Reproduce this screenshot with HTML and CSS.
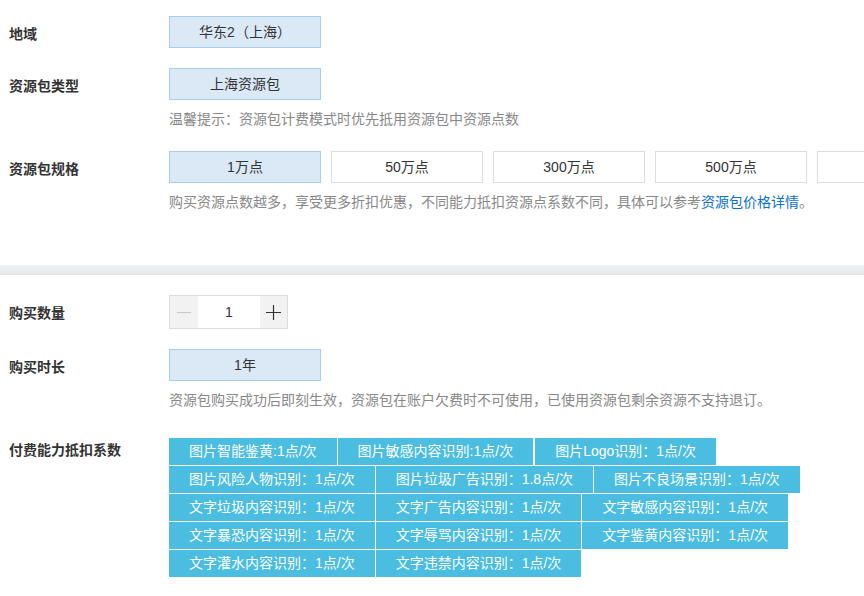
FILE: index.html
```html
<!DOCTYPE html>
<html lang="zh-CN">
<head>
    <meta charset="UTF-8">
    <meta name="viewport" content="width=device-width, initial-scale=1.0">
    <title>资源包购买</title>
    <link rel="stylesheet" href="styles.css">
</head>
<body>

<div class="page">
    <div class="section section-top">
        <div class="row">
            <div class="label">地域</div>
            <div class="field">
                <div class="options">
                    <span class="option active">华东2（上海）</span>
                </div>
            </div>
        </div>
        <div class="row">
            <div class="label">资源包类型</div>
            <div class="field">
                <div class="options">
                    <span class="option active">上海资源包</span>
                </div>
                <p class="hint">温馨提示：资源包计费模式时优先抵用资源包中资源点数</p>
            </div>
        </div>
        <div class="row">
            <div class="label">资源包规格</div>
            <div class="field">
                <div class="options">
                    <span class="option active">1万点</span>
                    <span class="option">50万点</span>
                    <span class="option">300万点</span>
                    <span class="option">500万点</span>
                    <span class="option"></span>
                </div>
                <p class="hint">购买资源点数越多，享受更多折扣优惠，不同能力抵扣资源点系数不同，具体可以参考<a href="#">资源包价格详情</a>。</p>
            </div>
        </div>
    </div>

    <div class="divider"></div>

    <div class="section section-bottom">
        <div class="row">
            <div class="label">购买数量</div>
            <div class="field">
                <div class="stepper">
                    <span class="step step-minus">
                        <svg width="14" height="14" viewBox="0 0 14 14"><path d="M0 7.5H14" stroke="#c8c8c8" stroke-width="1"/></svg>
                    </span>
                    <span class="step-value">1</span>
                    <span class="step step-plus">
                        <svg width="15" height="15" viewBox="0 0 15 15"><path d="M0 7.5H15M7.5 0V15" stroke="#333" stroke-width="1.2"/></svg>
                    </span>
                </div>
            </div>
        </div>
        <div class="row">
            <div class="label">购买时长</div>
            <div class="field">
                <div class="options">
                    <span class="option active">1年</span>
                </div>
                <p class="hint">资源包购买成功后即刻生效，资源包在账户欠费时不可使用，已使用资源包剩余资源不支持退订。</p>
            </div>
        </div>
        <div class="row row-tags">
            <div class="label label-tags">付费能力抵扣系数</div>
            <div class="field">
                <div class="tags">
                    <span class="tag">图片智能鉴黄:1点/次</span>
                    <span class="tag tag-wide">图片敏感内容识别:1点/次</span>
                    <span class="tag">图片Logo识别：1点/次</span>
                    <span class="tag">图片风险人物识别：1点/次</span>
                    <span class="tag">图片垃圾广告识别：1.8点/次</span>
                    <span class="tag">图片不良场景识别：1点/次</span>
                    <span class="tag">文字垃圾内容识别：1点/次</span>
                    <span class="tag">文字广告内容识别：1点/次</span>
                    <span class="tag">文字敏感内容识别：1点/次</span>
                    <span class="tag">文字暴恐内容识别：1点/次</span>
                    <span class="tag">文字辱骂内容识别：1点/次</span>
                    <span class="tag">文字鉴黄内容识别：1点/次</span>
                    <span class="tag">文字灌水内容识别：1点/次</span>
                    <span class="tag">文字违禁内容识别：1点/次</span>
                </div>
            </div>
        </div>
    </div>
</div>

</body>
</html>
```

FILE: styles.css
```css
/* Colors */
:root {
    --text: #333333;
    --muted: #888888;
    --link: #0a6fcf;
    --active-bg: #dbe8f5;
    --active-border: #a9cdec;
    --line: #dddddd;
    --tag: #4abde0;
}

html, body {
    overflow: hidden;
}

body {
    margin: 0;
    padding: 0;
    background-color: #ffffff;
    color: var(--text);
    font-family: "Liberation Sans", "Noto Sans CJK SC", sans-serif;
    font-size: 14px;
}

.page {
    width: 864px;
    overflow: hidden;
}

.section-top {
    padding: 16px 0 51px;
}

.section-bottom {
    padding: 20px 0 20px;
}

.divider {
    height: 9px;
    background: linear-gradient(#f1f2f4, #e7e8ea);
    border-bottom: 1px solid #e2e3e5;
}

/* Rows */
.row {
    display: flex;
    padding-left: 9px;
    margin-bottom: 20px;
}

.row:last-child {
    margin-bottom: 0;
}

.row-tags {
    margin-top: 26px;
}

.label {
    width: 160px;
    flex-shrink: 0;
    font-weight: bold;
    line-height: 20px;
    padding-top: 8px;
}

.label-tags {
    padding-top: 2px;
}

.field {
    flex: 1;
    min-width: 0;
}

/* Option buttons */
.options {
    display: flex;
    gap: 10px;
}

.option {
    flex-shrink: 0;
    width: 152px;
    height: 32px;
    box-sizing: border-box;
    border: 1px solid var(--line);
    background-color: #ffffff;
    text-align: center;
    line-height: 30px;
}

.option.active {
    background-color: var(--active-bg);
    border-color: var(--active-border);
}

.hint {
    margin: 9px 0 2px;
    line-height: 20px;
    color: var(--muted);
    white-space: nowrap;
}

.hint a {
    color: var(--link);
    text-decoration: none;
}

/* Quantity stepper */
.stepper {
    display: inline-flex;
    height: 34px;
    box-sizing: border-box;
    border: 1px solid var(--line);
}

.step {
    width: 28px;
    display: flex;
    align-items: center;
    justify-content: center;
    background-color: #f2f2f2;
}

.step-plus {
    width: 27px;
}

.step-value {
    width: 62px;
    text-align: center;
    line-height: 32px;
}

/* Deduction tags */
.tags {
    display: flex;
    flex-wrap: wrap;
    gap: 1px;
    width: 680px;
}

.tag {
    height: 27px;
    line-height: 27px;
    padding: 0 20px;
    background-color: var(--tag);
    color: #ffffff;
    white-space: nowrap;
}

.tag-wide {
    margin-right: 1px;
}
```
